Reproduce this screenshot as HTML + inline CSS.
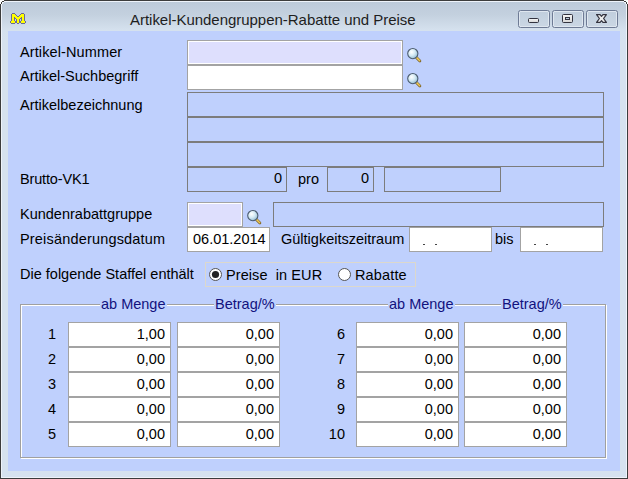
<!DOCTYPE html>
<html><head><meta charset="utf-8"><style>
html,body{margin:0;padding:0;width:628px;height:479px;overflow:hidden;background:#fff;position:relative}
.t{position:absolute;font-family:"Liberation Sans",sans-serif;font-size:14.5px;line-height:20px;white-space:nowrap;color:#000}
.title{font-size:15px;color:#1e1e1e;letter-spacing:-0.03px}
#win{position:absolute;left:0;top:0;width:628px;height:479px;box-sizing:border-box;border:1px solid #3c3c3c;
background:linear-gradient(#bccad9 0px,#c4d1df 14px,#d5e1ee 29px,#d6e2ef 40px,#d6e2ef 100%);
box-shadow:inset 0 0 0 1px #eef3fa}
#win::after{content:"";position:absolute;left:7px;top:30px;width:612px;height:440px;background:#bfd0fd}
.cb{position:absolute;top:10px;width:32px;height:18px;box-sizing:border-box;border:1px solid #6e7b95;border-radius:2.5px;
background:linear-gradient(#c0cedd,#cbd7e4);box-shadow:inset 0 0 0 1px #dfe7f0}
</style></head><body>
<div id="win"></div>
<div style="position:absolute;left:0px;top:0px;width:1px;height:1px;background:#ffffff"></div>
<div style="position:absolute;left:627px;top:0px;width:1px;height:1px;background:#ffffff"></div>
<div style="position:absolute;left:1px;top:0px;width:1px;height:1px;background:#ffffff"></div>
<div style="position:absolute;left:626px;top:0px;width:1px;height:1px;background:#ffffff"></div>
<div style="position:absolute;left:2px;top:0px;width:1px;height:1px;background:#ffffff"></div>
<div style="position:absolute;left:625px;top:0px;width:1px;height:1px;background:#ffffff"></div>
<div style="position:absolute;left:3px;top:0px;width:1px;height:1px;background:#ffffff"></div>
<div style="position:absolute;left:624px;top:0px;width:1px;height:1px;background:#ffffff"></div>
<div style="position:absolute;left:0px;top:1px;width:1px;height:1px;background:#ffffff"></div>
<div style="position:absolute;left:627px;top:1px;width:1px;height:1px;background:#ffffff"></div>
<div style="position:absolute;left:1px;top:1px;width:1px;height:1px;background:#ffffff"></div>
<div style="position:absolute;left:626px;top:1px;width:1px;height:1px;background:#ffffff"></div>
<div style="position:absolute;left:0px;top:2px;width:1px;height:1px;background:#ffffff"></div>
<div style="position:absolute;left:627px;top:2px;width:1px;height:1px;background:#ffffff"></div>
<div style="position:absolute;left:0px;top:3px;width:1px;height:1px;background:#ffffff"></div>
<div style="position:absolute;left:627px;top:3px;width:1px;height:1px;background:#ffffff"></div>
<div style="position:absolute;left:2px;top:1px;width:1px;height:1px;background:#3c3c3c"></div>
<div style="position:absolute;left:625px;top:1px;width:1px;height:1px;background:#3c3c3c"></div>
<div style="position:absolute;left:3px;top:1px;width:1px;height:1px;background:#3c3c3c"></div>
<div style="position:absolute;left:624px;top:1px;width:1px;height:1px;background:#3c3c3c"></div>
<div style="position:absolute;left:1px;top:2px;width:1px;height:1px;background:#3c3c3c"></div>
<div style="position:absolute;left:626px;top:2px;width:1px;height:1px;background:#3c3c3c"></div>
<div style="position:absolute;left:1px;top:3px;width:1px;height:1px;background:#3c3c3c"></div>
<div style="position:absolute;left:626px;top:3px;width:1px;height:1px;background:#3c3c3c"></div>
<div style="position:absolute;left:2px;top:2px;width:1px;height:1px;background:#eef3fa"></div>
<div style="position:absolute;left:625px;top:2px;width:1px;height:1px;background:#eef3fa"></div>
<div style="position:absolute;left:3px;top:2px;width:1px;height:1px;background:#eef3fa"></div>
<div style="position:absolute;left:624px;top:2px;width:1px;height:1px;background:#eef3fa"></div>
<div style="position:absolute;left:2px;top:3px;width:1px;height:1px;background:#eef3fa"></div>
<div style="position:absolute;left:625px;top:3px;width:1px;height:1px;background:#eef3fa"></div>
<div class="cb" style="left:518px"></div>
<div style="position:absolute;left:528px;top:18px;width:11px;height:5px;box-sizing:border-box;border:1px solid #33333f;border-radius:1.5px;background:linear-gradient(#f4f4f4,#d8d8d8)"></div>
<div class="cb" style="left:552px"></div>
<div style="position:absolute;left:562px;top:14px;width:11px;height:9px;box-sizing:border-box;border:1px solid #33333f;border-radius:1.5px;background:linear-gradient(#f4f4f4,#d8d8d8)"></div><div style="position:absolute;left:565px;top:17px;width:5px;height:3px;box-sizing:border-box;border:1px solid #33333f;background:#b8c8d8"></div>
<div class="cb" style="left:586px"></div>
<svg style="position:absolute;left:595px;top:13px" width="14" height="11" viewBox="0 0 14 11">
<path d="M1.6 1.6 H5.1 L6.5 3.3 L7.9 1.6 H11.4 L8.6 5.5 L11.4 9.4 H7.9 L6.5 7.7 L5.1 9.4 H1.6 L4.4 5.5 Z" fill="#ececec" stroke="#33333f" stroke-width="1.2" stroke-linejoin="round"/>
</svg>
<svg style="position:absolute;left:10px;top:13px" width="16" height="11" viewBox="0 0 16 11" shape-rendering="crispEdges"><rect x="2" y="0" width="1" height="1" fill="#6a6a96"/><rect x="3" y="0" width="1" height="1" fill="#6a6a96"/><rect x="4" y="0" width="1" height="1" fill="#6a6a96"/><rect x="11" y="0" width="1" height="1" fill="#6a6a96"/><rect x="12" y="0" width="1" height="1" fill="#6a6a96"/><rect x="13" y="0" width="1" height="1" fill="#6a6a96"/><rect x="1" y="1" width="1" height="1" fill="#6a6a96"/><rect x="2" y="1" width="1" height="1" fill="#ffff00"/><rect x="3" y="1" width="1" height="1" fill="#ffff00"/><rect x="4" y="1" width="1" height="1" fill="#ffff00"/><rect x="5" y="1" width="1" height="1" fill="#6a6a96"/><rect x="10" y="1" width="1" height="1" fill="#6a6a96"/><rect x="11" y="1" width="1" height="1" fill="#ffff00"/><rect x="12" y="1" width="1" height="1" fill="#ffff00"/><rect x="13" y="1" width="1" height="1" fill="#ffff00"/><rect x="14" y="1" width="1" height="1" fill="#6a6a96"/><rect x="1" y="2" width="1" height="1" fill="#6a6a96"/><rect x="2" y="2" width="1" height="1" fill="#ffff00"/><rect x="3" y="2" width="1" height="1" fill="#ffff00"/><rect x="4" y="2" width="1" height="1" fill="#ffff00"/><rect x="5" y="2" width="1" height="1" fill="#ffff00"/><rect x="6" y="2" width="1" height="1" fill="#6a6a96"/><rect x="9" y="2" width="1" height="1" fill="#6a6a96"/><rect x="10" y="2" width="1" height="1" fill="#ffff00"/><rect x="11" y="2" width="1" height="1" fill="#ffff00"/><rect x="12" y="2" width="1" height="1" fill="#ffff00"/><rect x="13" y="2" width="1" height="1" fill="#ffff00"/><rect x="14" y="2" width="1" height="1" fill="#6a6a96"/><rect x="1" y="3" width="1" height="1" fill="#6a6a96"/><rect x="2" y="3" width="1" height="1" fill="#ffff00"/><rect x="3" y="3" width="1" height="1" fill="#ffff00"/><rect x="4" y="3" width="1" height="1" fill="#ffff00"/><rect x="5" y="3" width="1" height="1" fill="#ffff00"/><rect x="6" y="3" width="1" height="1" fill="#ffff00"/><rect x="7" y="3" width="1" height="1" fill="#6a6a96"/><rect x="8" y="3" width="1" height="1" fill="#6a6a96"/><rect x="9" y="3" width="1" height="1" fill="#ffff00"/><rect x="10" y="3" width="1" height="1" fill="#ffff00"/><rect x="11" y="3" width="1" height="1" fill="#ffff00"/><rect x="12" y="3" width="1" height="1" fill="#ffff00"/><rect x="13" y="3" width="1" height="1" fill="#ffff00"/><rect x="14" y="3" width="1" height="1" fill="#6a6a96"/><rect x="1" y="4" width="1" height="1" fill="#6a6a96"/><rect x="2" y="4" width="1" height="1" fill="#ffff00"/><rect x="3" y="4" width="1" height="1" fill="#ffff00"/><rect x="4" y="4" width="1" height="1" fill="#6a6a96"/><rect x="5" y="4" width="1" height="1" fill="#ffff00"/><rect x="6" y="4" width="1" height="1" fill="#ffff00"/><rect x="7" y="4" width="1" height="1" fill="#ffff00"/><rect x="8" y="4" width="1" height="1" fill="#ffff00"/><rect x="9" y="4" width="1" height="1" fill="#ffff00"/><rect x="10" y="4" width="1" height="1" fill="#ffff00"/><rect x="11" y="4" width="1" height="1" fill="#6a6a96"/><rect x="12" y="4" width="1" height="1" fill="#ffff00"/><rect x="13" y="4" width="1" height="1" fill="#ffff00"/><rect x="14" y="4" width="1" height="1" fill="#6a6a96"/><rect x="1" y="5" width="1" height="1" fill="#6a6a96"/><rect x="2" y="5" width="1" height="1" fill="#ffff00"/><rect x="3" y="5" width="1" height="1" fill="#ffff00"/><rect x="4" y="5" width="1" height="1" fill="#6a6a96"/><rect x="5" y="5" width="1" height="1" fill="#6a6a96"/><rect x="6" y="5" width="1" height="1" fill="#ffff00"/><rect x="7" y="5" width="1" height="1" fill="#ffff00"/><rect x="8" y="5" width="1" height="1" fill="#ffff00"/><rect x="9" y="5" width="1" height="1" fill="#ffff00"/><rect x="10" y="5" width="1" height="1" fill="#6a6a96"/><rect x="11" y="5" width="1" height="1" fill="#6a6a96"/><rect x="12" y="5" width="1" height="1" fill="#ffff00"/><rect x="13" y="5" width="1" height="1" fill="#ffff00"/><rect x="14" y="5" width="1" height="1" fill="#6a6a96"/><rect x="1" y="6" width="1" height="1" fill="#6a6a96"/><rect x="2" y="6" width="1" height="1" fill="#ffff00"/><rect x="3" y="6" width="1" height="1" fill="#ffff00"/><rect x="4" y="6" width="1" height="1" fill="#6a6a96"/><rect x="6" y="6" width="1" height="1" fill="#6a6a96"/><rect x="7" y="6" width="1" height="1" fill="#ffff00"/><rect x="8" y="6" width="1" height="1" fill="#ffff00"/><rect x="9" y="6" width="1" height="1" fill="#6a6a96"/><rect x="11" y="6" width="1" height="1" fill="#6a6a96"/><rect x="12" y="6" width="1" height="1" fill="#ffff00"/><rect x="13" y="6" width="1" height="1" fill="#ffff00"/><rect x="14" y="6" width="1" height="1" fill="#6a6a96"/><rect x="1" y="7" width="1" height="1" fill="#6a6a96"/><rect x="2" y="7" width="1" height="1" fill="#ffff00"/><rect x="3" y="7" width="1" height="1" fill="#ffff00"/><rect x="4" y="7" width="1" height="1" fill="#6a6a96"/><rect x="6" y="7" width="1" height="1" fill="#6a6a96"/><rect x="7" y="7" width="1" height="1" fill="#ffff00"/><rect x="8" y="7" width="1" height="1" fill="#ffff00"/><rect x="9" y="7" width="1" height="1" fill="#6a6a96"/><rect x="11" y="7" width="1" height="1" fill="#6a6a96"/><rect x="12" y="7" width="1" height="1" fill="#ffff00"/><rect x="13" y="7" width="1" height="1" fill="#ffff00"/><rect x="14" y="7" width="1" height="1" fill="#6a6a96"/><rect x="0" y="8" width="1" height="1" fill="#6a6a96"/><rect x="1" y="8" width="1" height="1" fill="#ffff00"/><rect x="2" y="8" width="1" height="1" fill="#ffff00"/><rect x="3" y="8" width="1" height="1" fill="#ffff00"/><rect x="4" y="8" width="1" height="1" fill="#ffff00"/><rect x="5" y="8" width="1" height="1" fill="#6a6a96"/><rect x="6" y="8" width="1" height="1" fill="#6a6a96"/><rect x="7" y="8" width="1" height="1" fill="#ffff00"/><rect x="8" y="8" width="1" height="1" fill="#ffff00"/><rect x="9" y="8" width="1" height="1" fill="#6a6a96"/><rect x="10" y="8" width="1" height="1" fill="#6a6a96"/><rect x="11" y="8" width="1" height="1" fill="#ffff00"/><rect x="12" y="8" width="1" height="1" fill="#ffff00"/><rect x="13" y="8" width="1" height="1" fill="#ffff00"/><rect x="14" y="8" width="1" height="1" fill="#ffff00"/><rect x="15" y="8" width="1" height="1" fill="#6a6a96"/><rect x="0" y="9" width="1" height="1" fill="#6a6a96"/><rect x="1" y="9" width="1" height="1" fill="#ffff00"/><rect x="2" y="9" width="1" height="1" fill="#ffff00"/><rect x="3" y="9" width="1" height="1" fill="#ffff00"/><rect x="4" y="9" width="1" height="1" fill="#ffff00"/><rect x="5" y="9" width="1" height="1" fill="#6a6a96"/><rect x="6" y="9" width="1" height="1" fill="#6a6a96"/><rect x="7" y="9" width="1" height="1" fill="#ffff00"/><rect x="8" y="9" width="1" height="1" fill="#ffff00"/><rect x="9" y="9" width="1" height="1" fill="#6a6a96"/><rect x="10" y="9" width="1" height="1" fill="#6a6a96"/><rect x="11" y="9" width="1" height="1" fill="#ffff00"/><rect x="12" y="9" width="1" height="1" fill="#ffff00"/><rect x="13" y="9" width="1" height="1" fill="#ffff00"/><rect x="14" y="9" width="1" height="1" fill="#ffff00"/><rect x="15" y="9" width="1" height="1" fill="#6a6a96"/><rect x="1" y="10" width="1" height="1" fill="#6a6a96"/><rect x="2" y="10" width="1" height="1" fill="#6a6a96"/><rect x="3" y="10" width="1" height="1" fill="#6a6a96"/><rect x="4" y="10" width="1" height="1" fill="#6a6a96"/><rect x="7" y="10" width="1" height="1" fill="#6a6a96"/><rect x="8" y="10" width="1" height="1" fill="#6a6a96"/><rect x="11" y="10" width="1" height="1" fill="#6a6a96"/><rect x="12" y="10" width="1" height="1" fill="#6a6a96"/><rect x="13" y="10" width="1" height="1" fill="#6a6a96"/><rect x="14" y="10" width="1" height="1" fill="#6a6a96"/></svg>
<div class="t title" style="left:130px;top:10px">Artikel-Kundengruppen-Rabatte und Preise</div>
<div class="t" style="top:42px;left:20px;letter-spacing:0.11px;">Artikel-Nummer</div>
<div style="position:absolute;left:187px;top:40px;width:216px;height:25px;box-sizing:border-box;border:1px solid #a3a3a3;background:#dedffd;box-shadow:inset 0 0 0 1px #fff;"></div>
<svg style="position:absolute;left:406px;top:47px" width="17" height="17" viewBox="0 0 17 17">
<defs><radialGradient id="g40748" cx="0.38" cy="0.35" r="0.7"><stop offset="0" stop-color="#ffffff"/><stop offset="0.5" stop-color="#d4eaf4"/><stop offset="1" stop-color="#8fb8d0"/></radialGradient></defs>
<line x1="10.4" y1="10.4" x2="13.9" y2="13.9" stroke="#7a6128" stroke-width="2.8" stroke-linecap="round"/>
<line x1="10.4" y1="10.4" x2="13.7" y2="13.7" stroke="#ecc858" stroke-width="1.5" stroke-linecap="round"/>
<circle cx="6.8" cy="6.6" r="5.1" fill="url(#g40748)" stroke="#4d5d70" stroke-width="1.1"/>
</svg>
<div class="t" style="top:66px;left:20px;">Artikel-Suchbegriff</div>
<div style="position:absolute;left:187px;top:65px;width:216px;height:25px;box-sizing:border-box;border:1px solid #a3a3a3;background:#fff;box-shadow:inset 0 0 0 1px #fff;"></div>
<svg style="position:absolute;left:406px;top:72px" width="17" height="17" viewBox="0 0 17 17">
<defs><radialGradient id="g40773" cx="0.38" cy="0.35" r="0.7"><stop offset="0" stop-color="#ffffff"/><stop offset="0.5" stop-color="#d4eaf4"/><stop offset="1" stop-color="#8fb8d0"/></radialGradient></defs>
<line x1="10.4" y1="10.4" x2="13.9" y2="13.9" stroke="#7a6128" stroke-width="2.8" stroke-linecap="round"/>
<line x1="10.4" y1="10.4" x2="13.7" y2="13.7" stroke="#ecc858" stroke-width="1.5" stroke-linecap="round"/>
<circle cx="6.8" cy="6.6" r="5.1" fill="url(#g40773)" stroke="#4d5d70" stroke-width="1.1"/>
</svg>
<div class="t" style="top:95px;left:20px;">Artikelbezeichnung</div>
<div style="position:absolute;left:187px;top:92px;width:417px;height:25px;box-sizing:border-box;border:1px solid #7c7c7c;"></div>
<div style="position:absolute;left:187px;top:117px;width:417px;height:25px;box-sizing:border-box;border:1px solid #7c7c7c;"></div>
<div style="position:absolute;left:187px;top:142px;width:417px;height:25px;box-sizing:border-box;border:1px solid #7c7c7c;"></div>
<div class="t" style="top:169px;left:20px;letter-spacing:-0.15px;">Brutto-VK1</div>
<div style="position:absolute;left:187px;top:167px;width:100px;height:25px;box-sizing:border-box;border:1px solid #7c7c7c;"></div>
<div class="t" style="top:168px;left:-18px;width:300px;text-align:right;">0</div>
<div class="t" style="top:169px;left:298px;">pro</div>
<div style="position:absolute;left:327px;top:167px;width:47px;height:25px;box-sizing:border-box;border:1px solid #7c7c7c;"></div>
<div class="t" style="top:168px;left:69px;width:300px;text-align:right;">0</div>
<div style="position:absolute;left:384px;top:167px;width:117px;height:25px;box-sizing:border-box;border:1px solid #7c7c7c;"></div>
<div class="t" style="top:204px;left:20px;">Kundenrabattgruppe</div>
<div style="position:absolute;left:187px;top:202px;width:56px;height:25px;box-sizing:border-box;border:1px solid #a3a3a3;background:#dedffd;box-shadow:inset 0 0 0 1px #fff;"></div>
<svg style="position:absolute;left:246px;top:209px" width="17" height="17" viewBox="0 0 17 17">
<defs><radialGradient id="g247210" cx="0.38" cy="0.35" r="0.7"><stop offset="0" stop-color="#ffffff"/><stop offset="0.5" stop-color="#d4eaf4"/><stop offset="1" stop-color="#8fb8d0"/></radialGradient></defs>
<line x1="10.4" y1="10.4" x2="13.9" y2="13.9" stroke="#7a6128" stroke-width="2.8" stroke-linecap="round"/>
<line x1="10.4" y1="10.4" x2="13.7" y2="13.7" stroke="#ecc858" stroke-width="1.5" stroke-linecap="round"/>
<circle cx="6.8" cy="6.6" r="5.1" fill="url(#g247210)" stroke="#4d5d70" stroke-width="1.1"/>
</svg>
<div style="position:absolute;left:273px;top:202px;width:331px;height:25px;box-sizing:border-box;border:1px solid #7c7c7c;"></div>
<div class="t" style="top:229px;left:20px;letter-spacing:0.18px;">Preisänderungsdatum</div>
<div style="position:absolute;left:187px;top:227px;width:83px;height:25px;box-sizing:border-box;border:1px solid #a3a3a3;background:#fff;box-shadow:inset 0 0 0 1px #fff;"></div>
<div class="t" style="top:229px;left:193px;">06.01.2014</div>
<div class="t" style="top:229px;left:281px;">Gültigkeitszeitraum</div>
<div style="position:absolute;left:409px;top:227px;width:83px;height:25px;box-sizing:border-box;border:1px solid #a3a3a3;background:#fff;"></div>
<div class="t" style="top:229px;left:495px;">bis</div>
<div style="position:absolute;left:520px;top:227px;width:83px;height:25px;box-sizing:border-box;border:1px solid #a3a3a3;background:#fff;"></div>
<div style="position:absolute;left:423px;top:244px;width:2px;height:1px;background:#444"></div>
<div style="position:absolute;left:435px;top:244px;width:2px;height:1px;background:#444"></div>
<div style="position:absolute;left:534px;top:244px;width:2px;height:1px;background:#444"></div>
<div style="position:absolute;left:546px;top:244px;width:2px;height:1px;background:#444"></div>
<div class="t" style="top:264px;left:20px;">Die folgende Staffel enthält</div>
<div style="position:absolute;left:205px;top:262px;width:211px;height:25px;box-sizing:border-box;border:1px solid #dcd8cc;"></div>
<svg style="position:absolute;left:208px;top:267px" width="15" height="15" viewBox="0 0 15 15">
<circle cx="7.5" cy="7.5" r="6" fill="#fff" stroke="#555" stroke-width="1"/>
<circle cx="7.5" cy="7.5" r="3.6" fill="#222"/></svg>
<div class="t" style="top:265px;left:226px;letter-spacing:0.08px;">Preise&nbsp; in EUR</div>
<svg style="position:absolute;left:337px;top:267px" width="15" height="15" viewBox="0 0 15 15">
<circle cx="7.5" cy="7.5" r="6" fill="#fff" stroke="#555" stroke-width="1"/></svg>
<div class="t" style="top:265px;left:355px;letter-spacing:0.15px;">Rabatte</div>
<div style="position:absolute;left:20px;top:304px;width:586px;height:154px;box-sizing:border-box;border:1px solid #a0a0a0;box-shadow:1px 1px 0 0 #fff, inset 1px 1px 0 0 #fff;"></div>
<div class="t" style="left:100px;top:294px;color:#12127e;background:#bfd0fd;padding:0 1px">ab Menge</div>
<div class="t" style="left:214px;top:294px;color:#12127e;background:#bfd0fd;padding:0 1px">Betrag/%</div>
<div class="t" style="left:388px;top:294px;color:#12127e;background:#bfd0fd;padding:0 1px">ab Menge</div>
<div class="t" style="left:501px;top:294px;color:#12127e;background:#bfd0fd;padding:0 1px">Betrag/%</div>
<div style="position:absolute;left:68px;top:322px;width:103px;height:25px;box-sizing:border-box;border:1px solid #a3a3a3;background:#fff;"></div>
<div class="t" style="top:324px;left:-135px;width:300px;text-align:right;">1,00</div>
<div style="position:absolute;left:177px;top:322px;width:103px;height:25px;box-sizing:border-box;border:1px solid #a3a3a3;background:#fff;"></div>
<div class="t" style="top:324px;left:-26px;width:300px;text-align:right;">0,00</div>
<div style="position:absolute;left:356px;top:322px;width:103px;height:25px;box-sizing:border-box;border:1px solid #a3a3a3;background:#fff;"></div>
<div class="t" style="top:324px;left:153px;width:300px;text-align:right;">0,00</div>
<div style="position:absolute;left:464px;top:322px;width:103px;height:25px;box-sizing:border-box;border:1px solid #a3a3a3;background:#fff;"></div>
<div class="t" style="top:324px;left:261px;width:300px;text-align:right;">0,00</div>
<div class="t" style="top:324px;left:-244px;width:300px;text-align:right;">1</div>
<div class="t" style="top:324px;left:45px;width:300px;text-align:right;">6</div>
<div style="position:absolute;left:68px;top:347px;width:103px;height:25px;box-sizing:border-box;border:1px solid #a3a3a3;background:#fff;"></div>
<div class="t" style="top:349px;left:-135px;width:300px;text-align:right;">0,00</div>
<div style="position:absolute;left:177px;top:347px;width:103px;height:25px;box-sizing:border-box;border:1px solid #a3a3a3;background:#fff;"></div>
<div class="t" style="top:349px;left:-26px;width:300px;text-align:right;">0,00</div>
<div style="position:absolute;left:356px;top:347px;width:103px;height:25px;box-sizing:border-box;border:1px solid #a3a3a3;background:#fff;"></div>
<div class="t" style="top:349px;left:153px;width:300px;text-align:right;">0,00</div>
<div style="position:absolute;left:464px;top:347px;width:103px;height:25px;box-sizing:border-box;border:1px solid #a3a3a3;background:#fff;"></div>
<div class="t" style="top:349px;left:261px;width:300px;text-align:right;">0,00</div>
<div class="t" style="top:349px;left:-244px;width:300px;text-align:right;">2</div>
<div class="t" style="top:349px;left:45px;width:300px;text-align:right;">7</div>
<div style="position:absolute;left:68px;top:372px;width:103px;height:25px;box-sizing:border-box;border:1px solid #a3a3a3;background:#fff;"></div>
<div class="t" style="top:374px;left:-135px;width:300px;text-align:right;">0,00</div>
<div style="position:absolute;left:177px;top:372px;width:103px;height:25px;box-sizing:border-box;border:1px solid #a3a3a3;background:#fff;"></div>
<div class="t" style="top:374px;left:-26px;width:300px;text-align:right;">0,00</div>
<div style="position:absolute;left:356px;top:372px;width:103px;height:25px;box-sizing:border-box;border:1px solid #a3a3a3;background:#fff;"></div>
<div class="t" style="top:374px;left:153px;width:300px;text-align:right;">0,00</div>
<div style="position:absolute;left:464px;top:372px;width:103px;height:25px;box-sizing:border-box;border:1px solid #a3a3a3;background:#fff;"></div>
<div class="t" style="top:374px;left:261px;width:300px;text-align:right;">0,00</div>
<div class="t" style="top:374px;left:-244px;width:300px;text-align:right;">3</div>
<div class="t" style="top:374px;left:45px;width:300px;text-align:right;">8</div>
<div style="position:absolute;left:68px;top:397px;width:103px;height:25px;box-sizing:border-box;border:1px solid #a3a3a3;background:#fff;"></div>
<div class="t" style="top:399px;left:-135px;width:300px;text-align:right;">0,00</div>
<div style="position:absolute;left:177px;top:397px;width:103px;height:25px;box-sizing:border-box;border:1px solid #a3a3a3;background:#fff;"></div>
<div class="t" style="top:399px;left:-26px;width:300px;text-align:right;">0,00</div>
<div style="position:absolute;left:356px;top:397px;width:103px;height:25px;box-sizing:border-box;border:1px solid #a3a3a3;background:#fff;"></div>
<div class="t" style="top:399px;left:153px;width:300px;text-align:right;">0,00</div>
<div style="position:absolute;left:464px;top:397px;width:103px;height:25px;box-sizing:border-box;border:1px solid #a3a3a3;background:#fff;"></div>
<div class="t" style="top:399px;left:261px;width:300px;text-align:right;">0,00</div>
<div class="t" style="top:399px;left:-244px;width:300px;text-align:right;">4</div>
<div class="t" style="top:399px;left:45px;width:300px;text-align:right;">9</div>
<div style="position:absolute;left:68px;top:422px;width:103px;height:25px;box-sizing:border-box;border:1px solid #a3a3a3;background:#fff;"></div>
<div class="t" style="top:424px;left:-135px;width:300px;text-align:right;">0,00</div>
<div style="position:absolute;left:177px;top:422px;width:103px;height:25px;box-sizing:border-box;border:1px solid #a3a3a3;background:#fff;"></div>
<div class="t" style="top:424px;left:-26px;width:300px;text-align:right;">0,00</div>
<div style="position:absolute;left:356px;top:422px;width:103px;height:25px;box-sizing:border-box;border:1px solid #a3a3a3;background:#fff;"></div>
<div class="t" style="top:424px;left:153px;width:300px;text-align:right;">0,00</div>
<div style="position:absolute;left:464px;top:422px;width:103px;height:25px;box-sizing:border-box;border:1px solid #a3a3a3;background:#fff;"></div>
<div class="t" style="top:424px;left:261px;width:300px;text-align:right;">0,00</div>
<div class="t" style="top:424px;left:-244px;width:300px;text-align:right;">5</div>
<div class="t" style="top:424px;left:45px;width:300px;text-align:right;">10</div>
</body></html>
